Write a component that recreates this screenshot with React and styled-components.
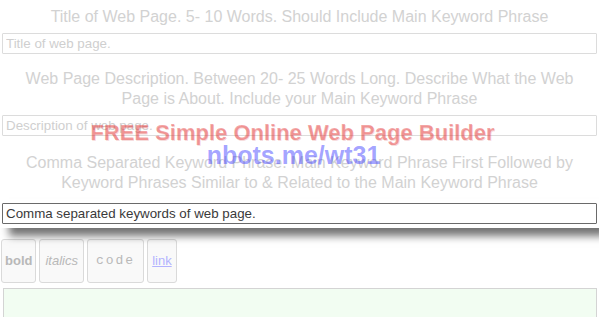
import React from 'react'
import styled, { createGlobalStyle } from 'styled-components'

const GlobalStyle = createGlobalStyle`
  html, body {
    margin: 0;
    padding: 0;
    background: #fff;
    font-family: "Liberation Sans", Arial, sans-serif;
    overflow: hidden;
  }
`

const Page = styled.div`
  position: relative;
  width: 599px;
  height: 317px;
  overflow: hidden;
`

const Form = styled.div`
  display: flex;
  flex-direction: column;
  padding: 0 2px;
`

const Heading = styled.div`
  text-align: center;
  font-size: 16px;
  line-height: 20.5px;
  color: #d2d2d2;
  padding: 0 22px;
  margin-top: ${props => props.top}px;
  margin-bottom: 5px;
`

const Field = styled.input`
  box-sizing: border-box;
  width: 100%;
  height: 21px;
  margin: 0;
  padding: 1px 3px;
  font-family: "Liberation Sans", Arial, sans-serif;
  font-size: 13.33px;
  color: #3a3a3a;
  background: #fff;
  border: 1px solid ${props => (props.active ? '#6a6a6a' : '#dcdcdc')};
  border-radius: 1px;
  outline: none;

  &::placeholder {
    color: ${props => (props.active ? '#3a3a3a' : '#cfcfcf')};
  }
`

const FocusPanel = styled.div`
  position: relative;
  z-index: 1;
  margin: 0 -2px;
  padding: 4px 2px 4px;
  background: #fff;
  box-shadow: 8px 9px 8px -1px rgba(0, 0, 0, 0.55);
`

const Toolbar = styled.div`
  display: flex;
  gap: 3px;
  margin: 11px 0 5px -1px;
`

const ToolButton = styled.button`
  height: 44px;
  padding: 0 ${props => props.pad}px;
  font-family: ${props => (props.mono ? '"Liberation Mono", "Courier New", monospace' : '"Liberation Sans", Arial, sans-serif')};
  font-size: 13px;
  font-weight: ${props => (props.bold ? 700 : 400)};
  font-style: ${props => (props.italic ? 'italic' : 'normal')};
  letter-spacing: ${props => (props.mono ? '2px' : '0')};
  color: ${props => (props.link ? '#b3b3ff' : '#b8b8b8')};
  text-decoration: ${props => (props.link ? 'underline' : 'none')};
  background: #f9f9f9;
  border: 1px solid #dadada;
  border-radius: 3px;
`

const Editor = styled.div`
  height: 40px;
  margin-left: 1px;
  background: #f2fdf2;
  border: 1px solid #d4d4d4;
`

const Overlay = styled.div`
  position: absolute;
  top: 121px;
  left: 0;
  right: 0;
  z-index: 2;
  display: flex;
  flex-direction: column;
  align-items: center;
  pointer-events: none;
  font-family: "Liberation Sans", Arial, sans-serif;
  font-weight: 700;
`

const Promo = styled.div`
  font-size: 22px;
  line-height: 24px;
  color: rgba(235, 60, 60, 0.38);
  text-shadow: 0.6px 0.6px 0 rgba(210, 40, 40, 0.18), -0.4px 0 0 rgba(210, 40, 40, 0.12);
  margin-left: -14px;
`

const ShortLink = styled.div`
  font-size: 25px;
  line-height: 21px;
  color: rgba(50, 50, 255, 0.45);
  margin-left: -12px;
`

export default function App() {
  return (
    <Page>
      <GlobalStyle />
      <Form>
        <Heading top={7}>Title of Web Page. 5- 10 Words. Should Include Main Keyword Phrase</Heading>
        <Field placeholder="Title of web page." />
        <Heading top={15}>
          Web Page Description. Between 20- 25 Words Long. Describe What the Web Page is About. Include your Main Keyword Phrase
        </Heading>
        <Field placeholder="Description of web page." />
        <Heading top={17}>
          Comma Separated Keyword Phrase. Main Keyword Phrase First Followed by Keyword Phrases Similar to &amp; Related to the Main Keyword Phrase
        </Heading>
        <FocusPanel>
          <Field active placeholder="Comma separated keywords of web page." />
        </FocusPanel>
        <Toolbar>
          <ToolButton bold pad={3}>bold</ToolButton>
          <ToolButton italic pad={5}>italics</ToolButton>
          <ToolButton mono pad={8}>code</ToolButton>
          <ToolButton link pad={4}>link</ToolButton>
        </Toolbar>
        <Editor />
      </Form>
      <Overlay>
        <Promo>FREE Simple Online Web Page Builder</Promo>
        <ShortLink>nbots.me/wt31</ShortLink>
      </Overlay>
    </Page>
  )
}
